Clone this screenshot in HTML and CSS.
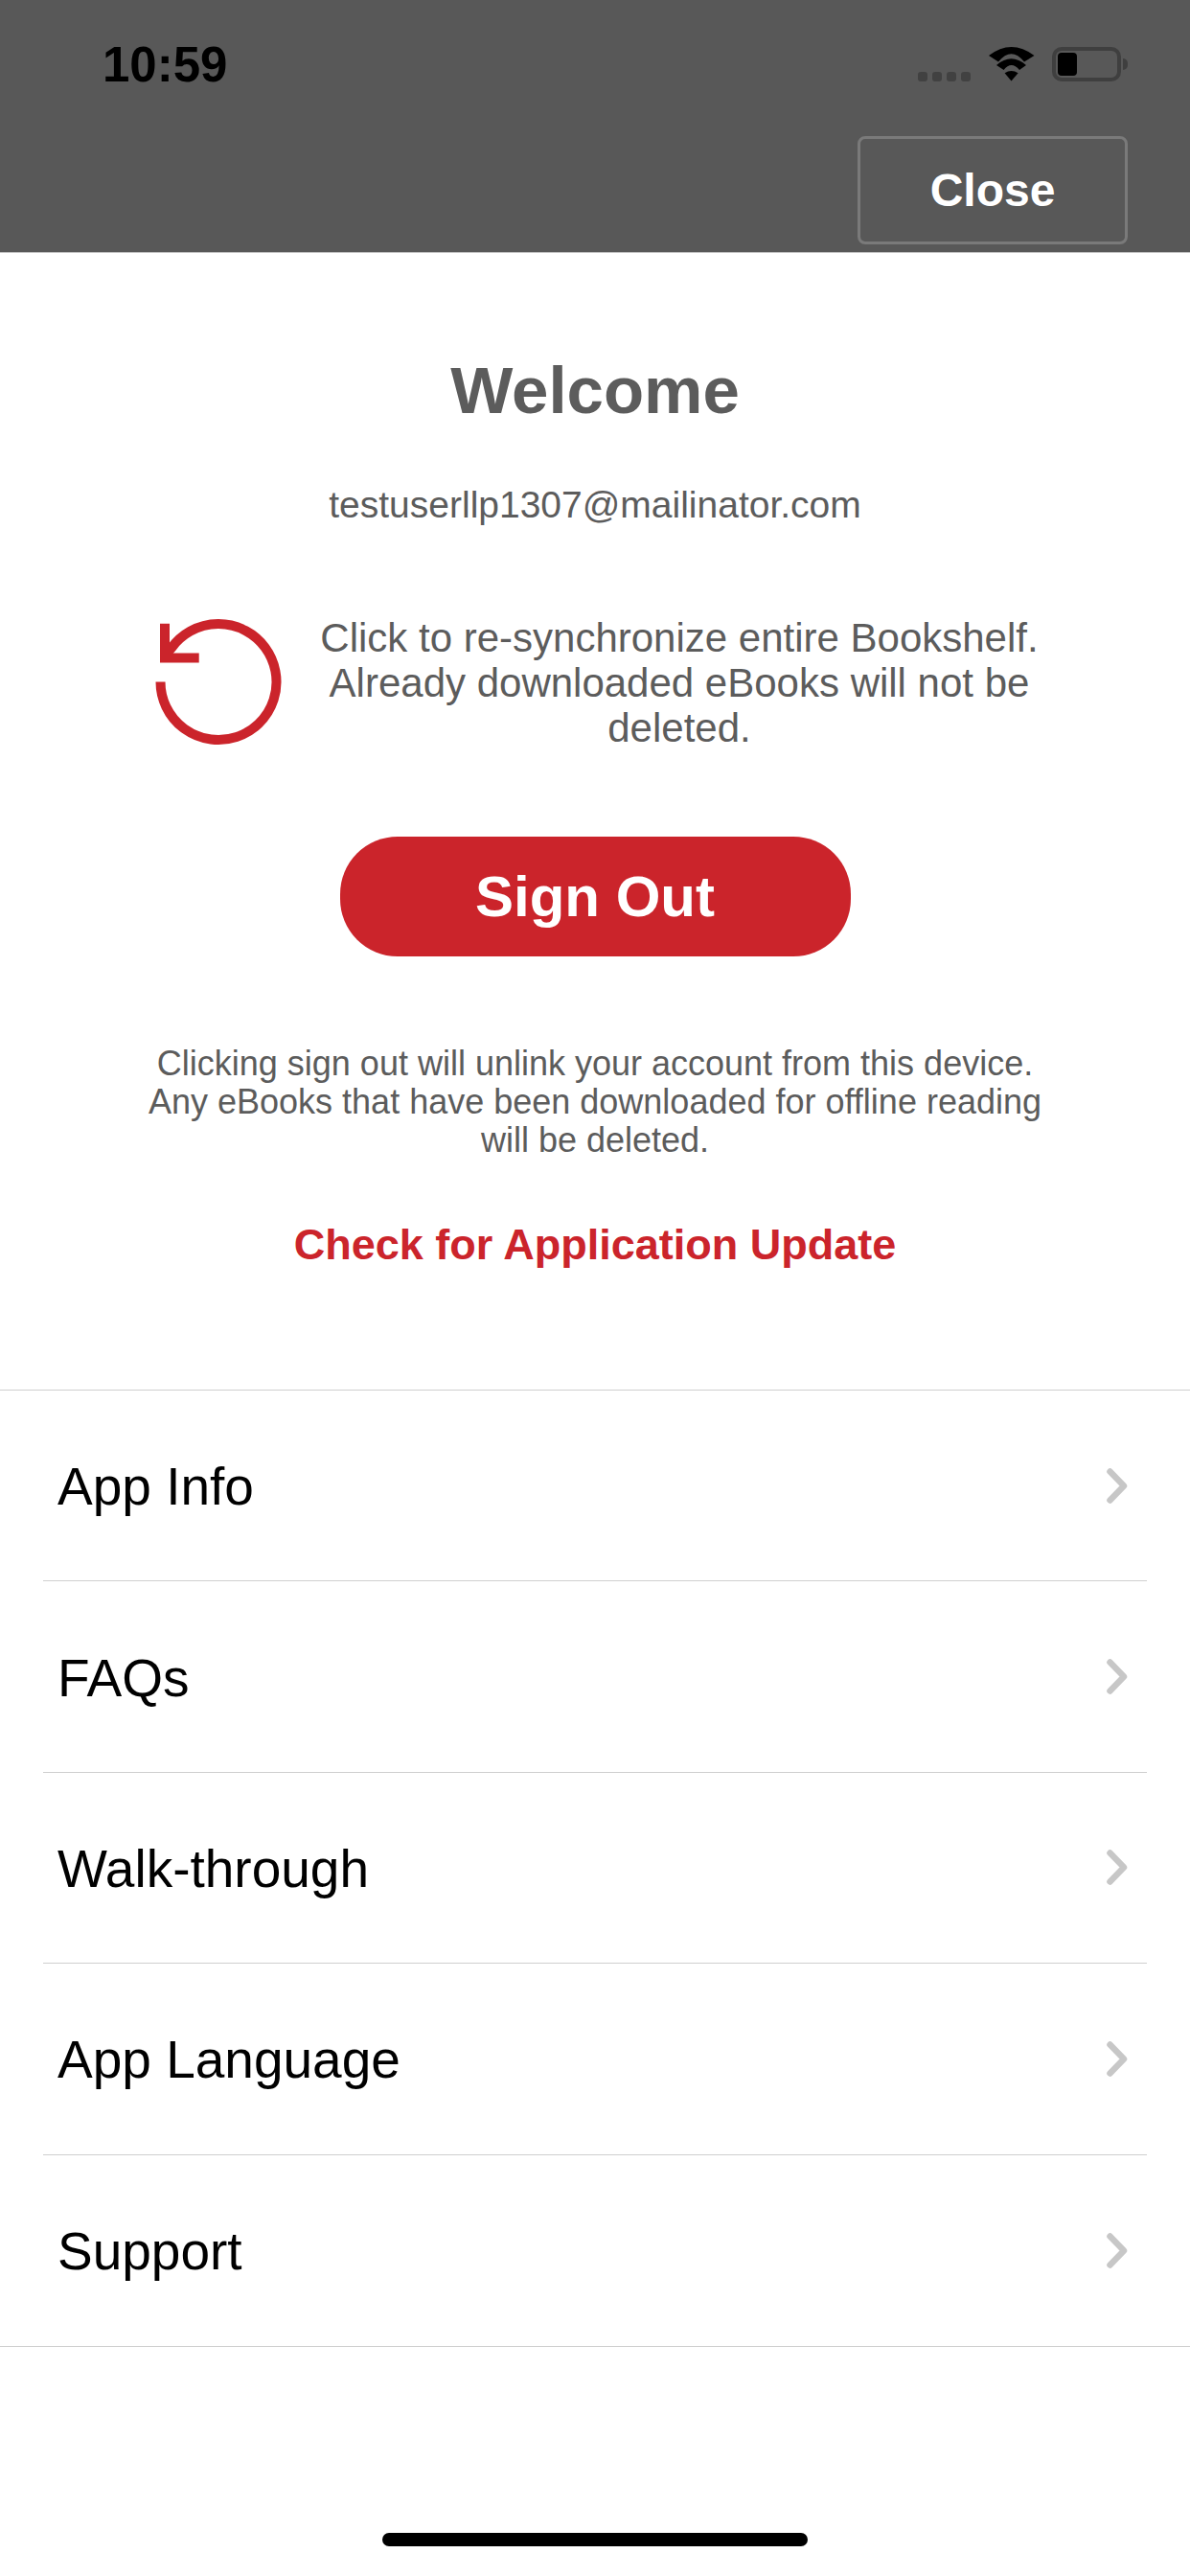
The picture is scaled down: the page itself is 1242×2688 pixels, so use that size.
FILE: index.html
```html
<!DOCTYPE html>
<html>
<head>
    <title>Account</title>
    <link rel="stylesheet" href="styles.css">
</head>
<body>
    <div class="header">
        <div class="statusBar">
            <span class="time">10:59</span>
            <div class="statusIcons">
                <div class="signal"><span></span><span></span><span></span><span></span></div>
                <svg class="wifi" width="48" height="36" viewBox="0 0 48 36">
                    <path d="M0 9 Q23.500 -9 47.500 9 L37 15.600 Q23.500 -1 10 15.600 Z" fill="#000"/>
                    <path d="M8 19 Q23.500 5.600 39 19 L32 24 Q23.500 14 15.600 24 Z" fill="#000"/>
                    <path d="M16.600 27.300 Q23.500 22.700 30.600 27.300 L23.500 35.600 Z" fill="#000"/>
                </svg>
                <div class="battery"><div class="batteryLevel"></div></div>
                <div class="batteryTip"></div>
            </div>
        </div>
        <div class="headerActions">
            <button class="closeButton">Close</button>
        </div>
    </div>

    <div class="account">
        <h1 class="welcome">Welcome</h1>
        <p class="email">testuserllp1307@mailinator.com</p>
        <div class="syncRow">
            <svg class="syncIcon" width="136" height="136" viewBox="0 0 136 136">
                <path d="M7.500 66.500 A60.500 60.500 0 1 0 18.700 31.500 L14 37" fill="none" stroke="#cb242b" stroke-width="10"/>
                <path d="M12 5.800 V41.500 H47.700" fill="none" stroke="#cb242b" stroke-width="10"/>
            </svg>
            <p class="syncText">Click to re-synchronize entire Bookshelf.<br>Already downloaded eBooks will not be<br>deleted.</p>
        </div>
        <button class="signOut">Sign Out</button>
        <p class="note">Clicking sign out will unlink your account from this device.<br>Any eBooks that have been downloaded for offline reading<br>will be deleted.</p>
        <a class="update">Check for Application Update</a>
    </div>

    <ul class="menu">
        <li class="menuItem"><span>App Info</span><svg class="chevron" width="22" height="37" viewBox="0 0 22 37"><path d="M3.500 3.500 L18 18.500 L3.500 33.500" fill="none" stroke="#c7c7c7" stroke-width="6.500" stroke-linecap="round" stroke-linejoin="round"/></svg></li>
        <li class="menuItem"><span>FAQs</span><svg class="chevron" width="22" height="37" viewBox="0 0 22 37"><path d="M3.500 3.500 L18 18.500 L3.500 33.500" fill="none" stroke="#c7c7c7" stroke-width="6.500" stroke-linecap="round" stroke-linejoin="round"/></svg></li>
        <li class="menuItem"><span>Walk-through</span><svg class="chevron" width="22" height="37" viewBox="0 0 22 37"><path d="M3.500 3.500 L18 18.500 L3.500 33.500" fill="none" stroke="#c7c7c7" stroke-width="6.500" stroke-linecap="round" stroke-linejoin="round"/></svg></li>
        <li class="menuItem"><span>App Language</span><svg class="chevron" width="22" height="37" viewBox="0 0 22 37"><path d="M3.500 3.500 L18 18.500 L3.500 33.500" fill="none" stroke="#c7c7c7" stroke-width="6.500" stroke-linecap="round" stroke-linejoin="round"/></svg></li>
        <li class="menuItem"><span>Support</span><svg class="chevron" width="22" height="37" viewBox="0 0 22 37"><path d="M3.500 3.500 L18 18.500 L3.500 33.500" fill="none" stroke="#c7c7c7" stroke-width="6.500" stroke-linecap="round" stroke-linejoin="round"/></svg></li>
    </ul>

    <div class="homeBar"></div>
</body>
</html>
```

FILE: styles.css
```css
html, body {
    margin: 0;
    padding: 0;
}
body {
    width: 1242px;
    height: 2688px;
    background-color: #fff;
    font-family: "Liberation Sans", Arial, sans-serif;
    display: flex;
    flex-direction: column;
    overflow: hidden;
}
.header {
    height: 264px;
    box-sizing: border-box;
    background-color: #585858;
    border-bottom: 1px solid #c4c4c4;
    display: flex;
    flex-direction: column;
}
.statusBar {
    height: 142px;
    box-sizing: border-box;
    padding: 40px 65px 0 107px;
    display: flex;
    justify-content: space-between;
    align-items: flex-start;
}
.time {
    font-size: 51px;
    line-height: 56px;
    font-weight: bold;
    color: #000;
}
.statusIcons {
    display: flex;
    align-items: flex-end;
    height: 36px;
    margin-top: 9px;
}
.signal {
    display: flex;
    gap: 5px;
    margin-right: 19px;
}
.signal span {
    width: 10px;
    height: 10px;
    border-radius: 3px;
    background-color: #414141;
}
.wifi {
    margin-right: 18px;
}
.battery {
    width: 72px;
    height: 36px;
    box-sizing: border-box;
    border: 4px solid #3f3f3f;
    border-radius: 10px;
    padding: 2px;
}
.batteryLevel {
    width: 20px;
    height: 100%;
    border-radius: 4px;
    background-color: #000;
}
.batteryTip {
    width: 5px;
    height: 12px;
    margin: 0 0 12px 2px;
    border-radius: 0 6px 6px 0;
    background-color: #3f3f3f;
}
.headerActions {
    display: flex;
    justify-content: flex-end;
    padding-right: 65px;
}
.closeButton {
    width: 282px;
    height: 113px;
    box-sizing: border-box;
    background-color: transparent;
    border: 3px solid #7a7a7a;
    border-radius: 8px;
    color: #fff;
    font-family: inherit;
    font-size: 48px;
    font-weight: bold;
    padding: 0;
}
.account {
    display: flex;
    flex-direction: column;
    align-items: center;
    height: 1186px;
    box-sizing: border-box;
    padding-top: 105px;
    color: #5c5c5c;
}
.welcome {
    margin: 0;
    font-size: 69px;
    line-height: 78px;
    font-weight: bold;
}
.email {
    margin: 58px 0 0;
    font-size: 39px;
    line-height: 44px;
}
.syncRow {
    display: flex;
    align-items: center;
    width: 1242px;
    margin-top: 93px;
}
.syncIcon {
    margin-left: 160px;
    flex-shrink: 0;
}
.syncText {
    flex: 1;
    margin: 0 136px 0 16px;
    font-size: 42px;
    line-height: 47px;
    text-align: center;
}
.signOut {
    width: 533px;
    height: 125px;
    margin-top: 90px;
    border: 0;
    border-radius: 60px;
    background-color: #cb242b;
    color: #fff;
    font-family: inherit;
    font-size: 60px;
    font-weight: bold;
    padding: 0;
}
.note {
    margin: 92px 0 0;
    font-size: 36px;
    line-height: 40px;
    text-align: center;
}
.update {
    margin-top: 63px;
    color: #cb242b;
    font-size: 45px;
    line-height: 52px;
    font-weight: bold;
}
.menu {
    list-style: none;
    margin: 0;
    padding: 0 45px;
    border-top: 1px solid #cfcfcf;
    border-bottom: 1px solid #cfcfcf;
}
.menuItem {
    height: 199.400px;
    box-sizing: border-box;
    padding: 0 20px 0 15px;
    border-bottom: 1px solid #cfcfcf;
    display: flex;
    align-items: center;
    justify-content: space-between;
    font-size: 55px;
    color: #000;
}
.menuItem span {
    margin-top: 2px;
}
.menuItem:last-child {
    border-bottom: 0;
}
.homeBar {
    width: 444px;
    height: 14px;
    margin: 194px auto 0;
    border-radius: 7px;
    background-color: #000;
}
```
